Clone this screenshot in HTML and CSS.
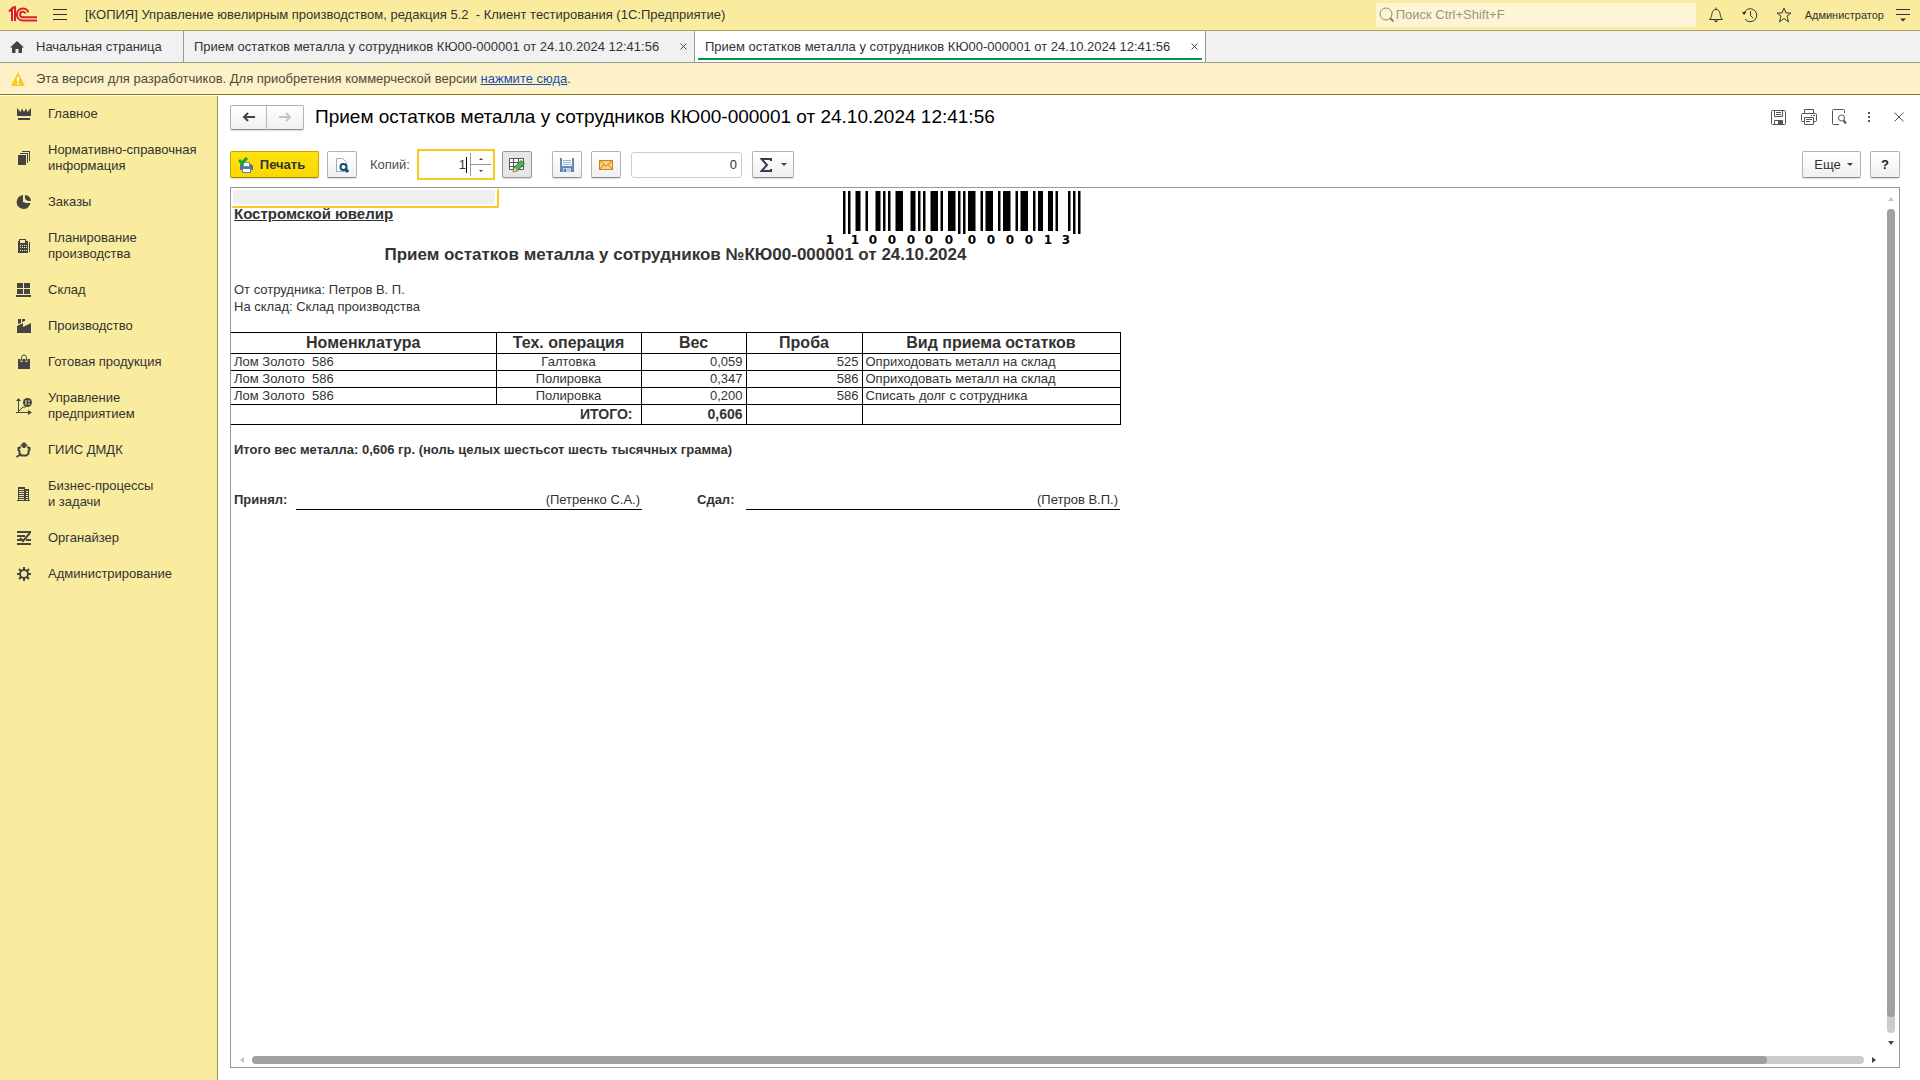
FILE: index.html
```html
<!DOCTYPE html>
<html lang="ru">
<head>
<meta charset="utf-8">
<title>Прием остатков металла у сотрудников</title>
<link rel="stylesheet" href="styles.css">
</head>
<body>
<header class="topbar">
  <svg class="logo" width="30" height="18" viewBox="0 0 30 18" fill="none" stroke="#d9202e" stroke-width="2"><path d="M1 5.500L4 2.500V15M7 15V1L5 2"/><path d="M20.500 6.500A6 6 0 1 0 15 14.500H29"/><path d="M17.500 7.500A2.800 2.800 0 1 0 15 11.300H29"/></svg>
  <button class="icon-btn burger" aria-label="Меню"><svg width="16" height="16" viewBox="0 0 16 16" stroke="#333"><path d="M1 2.500H15M1 7.500H15M1 12.500H15"/></svg></button>
  <span class="app-title">[КОПИЯ] Управление ювелирным производством, редакция 5.2 &nbsp;- Клиент тестирования (1С:Предприятие)</span>
  <label class="search">
    <svg width="16" height="16" viewBox="0 0 16 16" fill="none" stroke="#8f8960"><circle cx="7" cy="7" r="6"/><path d="M11 11L14.500 14.500" stroke-width="2"/></svg>
    <input type="text" placeholder="Поиск Ctrl+Shift+F" aria-label="Поиск">
  </label>
  <nav class="top-icons">
    <button class="icon-btn" aria-label="Уведомления"><svg width="16" height="16" viewBox="0 0 16 16" fill="none" stroke="#333"><path d="M1.500 12.500H14.500C12.500 10.500 12.500 9 12 6.500C11.500 3.500 10 2.500 8 2.500S4.500 3.500 4 6.500C3.500 9 3.500 10.500 1.500 12.500ZM8 0.500V2.500"/><path d="M5.500 13.500H10.500L8 15.500Z" fill="#333" stroke="none"/></svg></button>
    <button class="icon-btn" aria-label="История"><svg width="16" height="16" viewBox="0 0 16 16" fill="none" stroke="#333"><path d="M2 6.500A6.500 6.500 0 1 1 3 12M8.500 4V8.500L11 11"/><path d="M0 5H4.500L2 8Z" fill="#333" stroke="none"/></svg></button>
    <button class="icon-btn" aria-label="Избранное"><svg width="16" height="16" viewBox="0 0 16 16" fill="none" stroke="#333"><path d="M8 1.200L10 6H15L11 9.200L12.500 14.800L8 11.500L3.500 14.800L5 9.200L1 6H6Z"/></svg></button>
  </nav>
  <span class="user">Администратор</span>
  <button class="icon-btn" aria-label="Сервис"><svg width="16" height="16" viewBox="0 0 16 16" stroke="#333"><path d="M1 2.500H15M1 7.500H15"/><path d="M5 11.500H11L8 14.500Z" fill="#333" stroke="none"/></svg></button>
</header>

<nav class="tabs">
  <a class="tab home" href="#"><svg width="14" height="12" viewBox="0 0 14 12" fill="#444"><path d="M7 0L14 6.500H12V12H8.500V8H5.500V12H2V6.500H0Z"/></svg>Начальная страница</a>
  <a class="tab" href="#">Прием остатков металла у сотрудников КЮ00-000001 от 24.10.2024 12:41:56 <svg width="7" height="7" viewBox="0 0 7 7" stroke="#444"><path d="M0.500 0.500L6.500 6.500M6.500 0.500L0.500 6.500"/></svg></a>
  <a class="tab active" href="#">Прием остатков металла у сотрудников КЮ00-000001 от 24.10.2024 12:41:56 <svg width="7" height="7" viewBox="0 0 7 7" stroke="#444"><path d="M0.500 0.500L6.500 6.500M6.500 0.500L0.500 6.500"/></svg></a>
</nav>

<div class="notice">
  <svg width="14" height="14" viewBox="0 0 14 14"><path d="M7 0L14 14H0Z" fill="#fbc91f"/><path d="M7 5V9.500M7 11V12.500" stroke="#fff" stroke-width="2"/></svg>
  <span>Эта версия для разработчиков. Для приобретения коммерческой версии <a href="#">нажмите сюда</a>.</span>
</div>

<div class="workspace">
  <nav class="sidebar">
    <a href="#"><svg class="ico" viewBox="0 0 16 16"><path d="M1 2L4.500 6L6 2.500L8 6L10 2.500L11.500 6L15 2V10H1ZM2 12H14V14H2Z"/></svg>Главное</a>
    <a href="#"><svg class="ico" viewBox="0 0 16 16"><path d="M2 5H10V15H2ZM4 3H12V13H11V4H4ZM6 1H14V11H13V2H6Z"/></svg>Нормативно-справочная<br>информация</a>
    <a href="#"><svg class="ico" viewBox="0 0 16 16"><path d="M7 1V8L10 9H14.500A7 7 0 1 1 7 1ZM9 1A6 6 0 0 1 15 7H12L9 5Z"/></svg>Заказы</a>
    <a href="#"><svg class="ico" viewBox="0 0 16 16"><path fill-rule="evenodd" d="M3 3V1H10V3H12V15H2V3ZM4 2V5H9V2ZM4 7H5V8H4ZM6 7H7V8H6ZM8 7H9V8H8ZM10 7H11V8H10ZM4 9H5V10H4ZM6 9H7V10H6ZM8 9H9V10H8ZM10 9H11V10H10ZM4 12H5V13H4ZM6 12H7V13H6ZM8 12H9V13H8ZM10 12H11V13H10ZM13 4H14V14H13Z"/></svg>Планирование<br>производства</a>
    <a href="#"><svg class="ico" viewBox="0 0 16 16"><path d="M1 1H7V6H1ZM8 1H14V6H8ZM1 7H7V12H1ZM8 7H14V12H8ZM0 13H15V15H0Z"/></svg>Склад</a>
    <a href="#"><svg class="ico" viewBox="0 0 16 16"><path d="M1 15V8L7 5V9L15 5V15ZM2 1H5V5L2 6ZM6 1H9V3L6 4Z"/></svg>Производство</a>
    <a href="#"><svg class="ico" viewBox="0 0 16 16"><path d="M2 5H14V15H2Z"/><path d="M5.500 8V3.500A2.500 2.500 0 0 1 10.500 3.500V8" fill="none" stroke="#faec9e" stroke-width="2"/><path d="M5.500 7V3.500A2.500 2.500 0 0 1 10.500 3.500V7" fill="none" stroke="#444"/></svg>Готовая продукция</a>
    <a href="#"><svg class="ico" viewBox="0 0 16 16"><path d="M2.500 15V2M0 14.500H14M3 13L7 9H10" fill="none" stroke="#444"/><path d="M2.500 0L5 3H0ZM16 14.500L12 12V17Z"/><circle cx="11.500" cy="4.500" r="4.500"/><path d="M10 2V7M12 3H14M12 6H14" stroke="#faec9e"/></svg>Управление<br>предприятием</a>
    <a href="#"><svg class="ico" viewBox="0 0 16 16"><path d="M4.500 3L8 0L11.500 3L9 6H7Z"/><path d="M4.500 4.500L3.500 6H2.500V8L3.500 9V11.500L5.500 13.500H10.500L12.500 11.500V9L13.500 8V6H12.500L11.500 4.500M4.500 12.500L0.500 15" fill="none" stroke="#444" stroke-width="2"/></svg>ГИИС ДМДК</a>
    <a href="#"><svg class="ico" viewBox="0 0 16 16"><path fill-rule="evenodd" d="M2 1H9V3H13V14H14V15H1V14H2ZM3 3V4H8V3ZM3 5V6H8V5ZM3 7V8H8V7ZM3 9V10H8V9ZM3 11V12H8V11ZM10 5V6H12V5ZM10 7V8H12V7ZM10 9V10H12V9ZM10 11V12H12V11ZM3 13V14H8V13ZM10 13V14H12V13Z"/></svg>Бизнес-процессы<br>и задачи</a>
    <a href="#"><svg class="ico" viewBox="0 0 16 16"><path d="M1 2H15M1 6H9M1 10H5M10 10H15M1 14H15M4 8L7 11L14 3" fill="none" stroke="#444" stroke-width="2"/></svg>Органайзер</a>
    <a href="#"><svg class="ico" viewBox="0 0 16 16"><g fill="none" stroke="#444" stroke-width="2"><circle cx="8" cy="8" r="4"/><path d="M8 1V3.500M8 12.500V15M1 8H3.500M12.500 8H15M3 3L5 5M11 11L13 13M13 3L11 5M5 11L3 13"/></g></svg>Администрирование</a>
  </nav>

  <main class="form">
    <div class="form-head">
      <div class="history">
        <button class="btn" aria-label="Назад"><svg width="14" height="10" viewBox="0 0 14 10" fill="none" stroke="#444" stroke-width="2"><path d="M13 5H2M6 1L2 5L6 9"/></svg></button><button class="btn" aria-label="Вперед"><svg width="14" height="10" viewBox="0 0 14 10" fill="none" stroke="#c4c4c4" stroke-width="2"><path d="M1 5H12M8 1L12 5L8 9"/></svg></button>
      </div>
      <h1>Прием остатков металла у сотрудников КЮ00-000001 от 24.10.2024 12:41:56</h1>
      <div class="head-icons">
        <button class="icon-btn" aria-label="Сохранить"><svg width="16" height="16" viewBox="0 0 16 16" fill="none" stroke="#555"><rect x="0.500" y="1.500" width="14" height="14" rx="1"/><path d="M3.500 2V7.500H11.500V2M5 3.500H10M5 5.500H10M3.500 15V11.500H11.500V15"/><path d="M7 12H11V15H7Z" fill="#555" stroke="none"/></svg></button>
        <button class="icon-btn" aria-label="Печать"><svg width="16" height="16" viewBox="0 0 16 16" fill="none" stroke="#555"><path d="M3.500 4V0.500H12.500V4M3.500 12.500H1.500A1 1 0 0 1 0.500 11.500V5.500A1 1 0 0 1 1.500 4.500H14.500A1 1 0 0 1 15.500 5.500V11.500A1 1 0 0 1 14.500 12.500H12.500M3.500 8.500H12.500V15.500H3.500ZM5 10.500H11M5 12.500H9M10 6.500H11M12 6.500H14"/></svg></button>
        <button class="icon-btn" aria-label="Просмотр"><svg width="16" height="16" viewBox="0 0 16 16" fill="none" stroke="#555"><path d="M8 15.500H2.500A1 1 0 0 1 1.500 14.500V1.500A1 1 0 0 1 2.500 0.500H12.500A1 1 0 0 1 13.500 1.500V4"/><circle cx="10.500" cy="9" r="3"/><path d="M12.500 11.500L15 14.500" stroke-width="2"/></svg></button>
        <button class="icon-btn" aria-label="Еще действия"><svg width="16" height="16" viewBox="0 0 16 16" fill="#555"><path d="M7 3H9V5H7ZM7 7H9V9H7ZM7 11H9V13H7Z"/></svg></button>
        <button class="icon-btn" aria-label="Закрыть"><svg width="16" height="16" viewBox="0 0 16 16" stroke="#555"><path d="M3.500 3.500L12.500 12.500M12.500 3.500L3.500 12.500"/></svg></button>
      </div>
    </div>

    <div class="toolbar">
      <button class="btn print"><svg width="16" height="16" viewBox="0 0 16 16"><path d="M2 7H13L15 9V13H2Z" fill="#4d7596"/><path d="M5.500 5.500H11.500V9.500H5.500Z" fill="#fff" stroke="#7592a8"/><path d="M4.500 11.500H12.500V15.500H4.500Z" fill="#fff" stroke="#5c7d96"/><path d="M1 3L4 6L9 1" fill="none" stroke="#17a32c" stroke-width="3"/></svg>Печать</button>
      <button class="btn square preview" aria-label="Предварительный просмотр"><svg width="16" height="16" viewBox="0 0 16 16"><path d="M2.500 1.500H8.500L12.500 5.500V14.500H2.500Z" fill="#fff" stroke="#9eabb6"/><circle cx="9.500" cy="10" r="3" fill="#fff" stroke="#0f5079" stroke-width="2"/><path d="M11.500 12L14 15" stroke="#0f5079" stroke-width="3"/></svg></button>
      <label class="copies-label" for="copies">Копий:</label>
      <div class="copies">
        <input id="copies" type="text" value="1"><i class="caret"></i>
        <span class="spin"><button aria-label="Больше"><svg width="4" height="2" viewBox="0 0 4 2" fill="#444"><path d="M0 2L2 0L4 2Z"/></svg></button><button aria-label="Меньше"><svg width="4" height="2" viewBox="0 0 4 2" fill="#444"><path d="M0 0L2 2L4 0Z"/></svg></button></span>
      </div>
      <button class="btn square pressed" aria-label="Редактирование"><svg width="18" height="16" viewBox="0 0 18 16"><path d="M1.500 1.500H15.500V12.500H1.500Z" fill="#fff"/><path d="M1.500 1.500H15.500V12.500H1.500ZM1 5.500H16M1 9.500H16M5.500 1V13M10.500 1V13" fill="none" stroke="#555"/><path d="M5 15L6.500 10L13 3.500L16.500 6.500L10 13.500Z" fill="#4fb257" stroke="#33763b"/><path d="M5 15L6.500 10.500L9.500 13.500Z" fill="#f0c890"/></svg></button>
      <button class="btn square save" aria-label="Сохранить"><svg width="14" height="14" viewBox="0 0 14 14"><path d="M0 0H14V14H0Z" fill="#5f8ab5"/><path d="M2 0H12V8H2Z" fill="#fff"/><path d="M3 2.500H11M3 4.500H11M3 6.500H11" stroke="#8fb0cf"/><path d="M3 10H11V14H3Z" fill="#c3ccd3"/><path d="M4 11H6V14H4Z" fill="#4f7cab"/></svg></button>
      <button class="btn square" aria-label="Отправить"><svg width="14" height="10" viewBox="0 0 14 10"><path d="M0.500 0.500H13.500V9.500H0.500Z" fill="#fbd183" stroke="#c98218"/><path d="M0.500 0.500L7 6L13.500 0.500M0.500 9.500L5 4.500M13.500 9.500L9 4.500" fill="none" stroke="#c98218"/></svg></button>
      <input class="sum" type="text" value="0" aria-label="Сумма">
      <button class="btn sigma" aria-label="Функция"><svg width="12" height="14" viewBox="0 0 12 14" fill="none" stroke="#333f4a" stroke-width="2"><path d="M11 3V1H1.500L7 7L1.500 13H11V11"/></svg><svg width="6" height="3" viewBox="0 0 6 3" fill="#444"><path d="M0 0H6L3 3Z"/></svg></button>
      <button class="btn more">Еще<svg width="6" height="3" viewBox="0 0 6 3" fill="#444"><path d="M0 0H6L3 3Z"/></svg></button>
      <button class="btn square help">?</button>
    </div>

    <div class="sheet">
      <div class="doc">
        <div class="doc-top">
          <div class="cell-sel"></div>
          <p class="company">Костромской ювелир</p>
          <svg class="barcode" width="256" height="54" viewBox="0 0 256 54">
            <g transform="translate(18 0) scale(2.500 1)"><path d="M0 0h1v43h-1zM2 0h1v43h-1zM5 0h2v40h-2zM9 0h1v40h-1zM13 0h2v40h-2zM16 0h1v40h-1zM18 0h1v40h-1zM21 0h3v40h-3zM27 0h2v40h-2zM30 0h1v40h-1zM32 0h1v40h-1zM35 0h3v40h-3zM39 0h1v40h-1zM42 0h3v40h-3zM46 0h1v43h-1zM48 0h1v43h-1zM50 0h3v40h-3zM55 0h1v40h-1zM57 0h3v40h-3zM62 0h1v40h-1zM64 0h3v40h-3zM69 0h1v40h-1zM71 0h3v40h-3zM76 0h1v40h-1zM78 0h2v40h-2zM82 0h2v40h-2zM85 0h1v40h-1zM90 0h1v40h-1zM92 0h1v43h-1zM94 0h1v43h-1z"/></g>
            <text y="53" x="5 30 48 67 86 104 124 147 166 185 204 223 241">1100000000013</text>
          </svg>
        </div>
        <h2>Прием остатков металла у сотрудников №КЮ00-000001 от 24.10.2024</h2>
        <p class="line">От сотрудника: Петров В. П.</p>
        <p class="line">На склад: Склад производства</p>
        <table class="grid">
          <colgroup><col class="c1"><col class="c2"><col class="c3"><col class="c4"><col class="c5"></colgroup>
          <thead><tr><th>Номенклатура</th><th>Тех. операция</th><th>Вес</th><th>Проба</th><th>Вид приема остатков</th></tr></thead>
          <tbody>
            <tr><td>Лом Золото &nbsp;586</td><td class="mid">Галтовка</td><td class="num">0,059</td><td class="num">525</td><td>Оприходовать металл на склад</td></tr>
            <tr><td>Лом Золото &nbsp;586</td><td class="mid">Полировка</td><td class="num">0,347</td><td class="num">586</td><td>Оприходовать металл на склад</td></tr>
            <tr><td>Лом Золото &nbsp;586</td><td class="mid">Полировка</td><td class="num">0,200</td><td class="num">586</td><td>Списать долг с сотрудника</td></tr>
          </tbody>
          <tfoot><tr><td colspan="2" class="total">ИТОГО:</td><td class="num">0,606</td><td></td><td></td></tr></tfoot>
        </table>
        <p class="words">Итого вес металла: 0,606 гр. (ноль целых шестьсот шесть тысячных грамма)</p>
        <div class="signs">
          <b>Принял:</b><span>(Петренко С.А.)</span>
          <b class="gave">Сдал:</b><span>(Петров В.П.)</span>
        </div>
      </div>
      <div class="vbar"><svg width="6" height="4" viewBox="0 0 6 4" fill="#c4c4c4"><path d="M0 4L3 0L6 4Z"/></svg><div class="track"><div class="thumb"></div></div><svg width="6" height="4" viewBox="0 0 6 4" fill="#444"><path d="M0 0L3 4L6 0Z"/></svg></div>
      <div class="hbar"><svg width="4" height="6" viewBox="0 0 4 6" fill="#c4c4c4"><path d="M4 0L0 3L4 6Z"/></svg><div class="track"><div class="thumb"></div></div><svg width="4" height="6" viewBox="0 0 4 6" fill="#444"><path d="M0 0L4 3L0 6Z"/></svg></div>
    </div>
  </main>
</div>
</body>
</html>
```
FILE: styles.css
```css
* { box-sizing: border-box; }
body {
  margin: 0;
  min-height: 100vh;
  display: flex;
  flex-direction: column;
  font: 13px/16px "Liberation Sans", Arial, sans-serif;
  color: #333;
  background: #fff;
}
button, input { font: inherit; color: inherit; }
p, h1, h2 { margin: 0; }
svg { display: block; flex: none; }

.icon-btn { padding: 0; border: 0; background: none; width: 16px; height: 16px; flex: none; }

.topbar {
  display: flex;
  align-items: center;
  height: 31px;
  padding: 0 9px 0 8px;
  background: #faec9e;
  border-bottom: 1px solid #a9a26c;
}
.burger { margin: 0 17px 0 14px; }
.app-title { flex: 1; white-space: nowrap; }
.search {
  display: flex;
  align-items: center;
  width: 320px;
  height: 24px;
  padding-left: 3px;
  gap: 1px;
  border-radius: 2px;
  background: #fdf6d6;
}
.search input { flex: 1; min-width: 0; border: 0; padding: 0; background: none; outline: 0; }
.search input::placeholder { color: #9b967c; opacity: 1; }
.top-icons { display: flex; gap: 18px; margin: 0 13px 0 12px; }
.user { font-size: 11px; margin-right: 11px; }

.tabs {
  display: flex;
  height: 32px;
  background: #f1f1f1;
  border-bottom: 1px solid #999;
}
.tab {
  display: flex;
  align-items: center;
  justify-content: space-between;
  width: 511px;
  padding: 0 7px 0 10px;
  color: #333;
  text-decoration: none;
  white-space: nowrap;
  border-right: 1px solid #999;
}
.tab.home { width: 184px; justify-content: flex-start; gap: 12px; }
.tab.active { background: #fff linear-gradient(#009646, #009646) 50% 27px / calc(100% - 6px) 2px no-repeat; }

.notice {
  display: flex;
  align-items: center;
  gap: 11px;
  height: 32px;
  padding-left: 11px;
  color: #4d4a3d;
  background: #fdf2c7;
  border-bottom: 1px solid #94771a;
}
.notice a { color: #1a4fae; }

.workspace { flex: 1; display: flex; padding-top: 1px; }
.sidebar { flex: none; width: 218px; background: #faec9e; border-right: 1px solid #93905c; }
.sidebar a {
  display: grid;
  grid-template-columns: 16px auto;
  column-gap: 16px;
  align-items: center;
  padding: 10px 0 10px 16px;
  color: #333;
  text-decoration: none;
}
.sidebar a .ico { grid-row: 1 / span 2; }
.ico { width: 16px; height: 16px; fill: #444; overflow: visible; }

.form { flex: 1; min-width: 0; display: flex; flex-direction: column; padding: 8px 20px 12px 12px; }
.form-head { display: flex; align-items: center; height: 26px; }
.form-head h1 { flex: 1; padding-left: 11px; font-size: 19px; line-height: 24px; font-weight: 400; color: #000; white-space: nowrap; }
.head-icons { display: flex; gap: 14px; margin-right: -7px; }

.btn {
  display: flex;
  align-items: center;
  justify-content: center;
  height: 27px;
  padding: 0;
  border: 1px solid #b3b3b3;
  border-bottom-color: #8f8f8f;
  border-radius: 2px;
  background: linear-gradient(#fff, #f0f0f0);
  box-shadow: 0 1px 1px #ddd;
  flex: none;
}
.history { display: flex; }
.history .btn { width: 37px; height: 25px; border-radius: 2px 0 0 2px; }
.history .btn + .btn { border-left: 0; border-radius: 0 2px 2px 0; }

.toolbar { display: flex; align-items: center; height: 31px; margin-top: 19px; }
.square { width: 30px; }
.print {
  width: 89px;
  gap: 6px;
  padding-right: 6px;
  font-weight: 700;
  border-color: #c9a500;
  border-bottom-color: #9f8400;
  background: linear-gradient(#ffe30f, #f8d800);
}
.preview { margin-left: 8px; }
.copies-label { margin: 0 6px 0 13px; width: 41px; color: #4d4d4d; }
.copies { display: flex; align-items: center; width: 78px; height: 31px; border: 2px solid #fbc91f; background: #fff; }
.copies input { flex: 1; min-width: 0; border: 0; padding: 0; text-align: right; outline: 0; background: none; }
.caret { width: 1px; height: 16px; background: #000; margin-right: 3px; }
.spin { display: flex; flex-direction: column; width: 21px; height: 23px; margin-right: 2px; border-left: 1px solid #999; }
.spin button { flex: 1; display: flex; align-items: center; justify-content: center; border: 0; padding: 0; background: none; }
.spin button + button { border-top: 1px solid #999; }
.pressed { margin-left: 7px; background: #e6e6e6; border-color: #999; }
.save { margin: 0 9px 0 20px; }
.sum { width: 111px; height: 26px; margin: 0 10px; padding: 0 4px; border: 1px solid #ccc; border-radius: 3px; text-align: right; }
.sigma { width: 42px; gap: 9px; }
.more { width: 59px; margin: 0 9px 0 auto; gap: 6px; padding-left: 4px; }
.help { font-weight: 700; color: #222; }

.sheet {
  flex: 1;
  display: grid;
  grid-template: 1fr 16px / 1fr 16px;
  margin-top: 7px;
  border: 1px solid #999;
}
.doc { width: 889px; font-size: 13px; line-height: 17px; }
.doc-top { display: grid; grid-template: 20px 38px / 594px auto; }
.cell-sel {
  width: 268px;
  height: 20px;
  border: 2px solid #fff;
  border-right-color: #fbc91f;
  border-bottom-color: #fbc91f;
  background: #efefef;
  box-shadow: inset -2px -2px #fff;
}
.company { grid-row: 2; padding-left: 3px; font-size: 15px; font-weight: 700; line-height: 12px; text-decoration: underline; }
.barcode { grid-area: 1 / 2 / span 2 / auto; margin-top: 3px; height: 54px; overflow: visible; }
.barcode text { font: 700 12px "DejaVu Sans", sans-serif; text-anchor: middle; }
.doc h2 { font-size: 17px; line-height: 17px; text-align: center; }
.line { padding-left: 3px; }
h2 + .line { margin-top: 18px; }
.grid { width: 889px; margin-top: 17px; table-layout: fixed; border-collapse: collapse; }
.c1 { width: 265px; }
.c2 { width: 145px; }
.c3 { width: 105px; }
.c4 { width: 116px; }
.c5 { width: 258px; }
.grid th, .grid td { padding: 0 3px; height: 17px; line-height: 16px; border: 1px solid #000; white-space: nowrap; text-align: left; }
.grid tr > :first-child { border-left: 0; }
.grid th { height: 21px; font-size: 16px; line-height: 20px; text-align: center; }
.grid .mid { text-align: center; }
.grid .num { text-align: right; }
.grid tfoot td { height: 20px; font-size: 14px; line-height: 19px; font-weight: 700; }
.grid .total { text-align: right; padding-right: 8px; }
.words { margin-top: 16px; padding-left: 3px; font-weight: 700; }
.signs { display: grid; grid-template-columns: 62px 346px 104px 374px; margin: 33px 0 0 3px; line-height: 18px; }
.signs span { text-align: right; padding-right: 2px; border-bottom: 1px solid #000; }
.signs .gave { padding-left: 55px; }

.vbar, .hbar { display: flex; align-items: center; gap: 8px; }
.vbar { flex-direction: column; padding: 9px 0 6px; }
.hbar { grid-row: 2; padding: 1px 7px 0 9px; }
.track { flex: 1; background: #cbcbcb; border-radius: 4px; }
.thumb { background: #a0a0a0; border-radius: 4px; }
.vbar .track { width: 8px; }
.vbar .thumb { height: 98%; }
.hbar .track { height: 8px; }
.hbar .thumb { height: 8px; width: 94%; }
```
